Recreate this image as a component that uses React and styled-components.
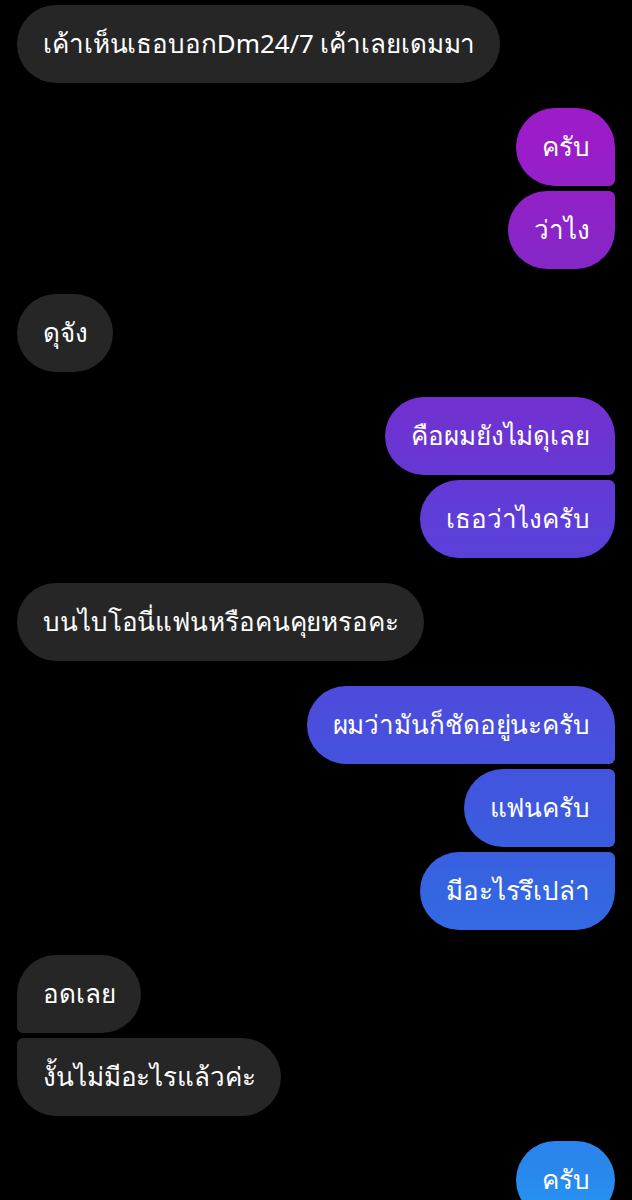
import React from 'react';
import styled, { createGlobalStyle, css } from 'styled-components';

const GlobalStyle = createGlobalStyle`
  html, body {
    margin: 0;
    padding: 0;
    background: #000;
  }
  body {
    font-family: "Noto Sans", "DejaVu Sans", sans-serif;
  }
`;

const messages = [
  { from: 'them', group: ['เค้าเห็นเธอบอกDm24/7 เค้าเลยเดมมา'] },
  { from: 'me', group: ['ครับ', 'ว่าไง'] },
  { from: 'them', group: ['ดุจัง'] },
  { from: 'me', group: ['คือผมยังไม่ดุเลย', 'เธอว่าไงครับ'] },
  { from: 'them', group: ['บนไบโอนี่แฟนหรือคนคุยหรอคะ'] },
  { from: 'me', group: ['ผมว่ามันก็ชัดอยู่นะครับ', 'แฟนครับ', 'มีอะไรรึเปล่า'] },
  { from: 'them', group: ['อดเลย', 'งั้นไม่มีอะไรแล้วค่ะ'] },
  { from: 'me', group: ['ครับ'] },
];

export default function App() {
  return (
    <>
      <GlobalStyle />
      <Thread>
        {messages.map((m, i) => (
          <Group key={i} $mine={m.from === 'me'}>
            {m.group.map((text, j) => (
              <Bubble
                key={j}
                $mine={m.from === 'me'}
                $first={j === 0}
                $last={j === m.group.length - 1}
              >
                {text}
              </Bubble>
            ))}
          </Group>
        ))}
      </Thread>
    </>
  );
}

const Thread = styled.div`
  display: flex;
  flex-direction: column;
  gap: 25px;
  padding: 5px 17px 0;
  height: 1200px;
  box-sizing: border-box;
  overflow: hidden;
`;

const Group = styled.div`
  display: flex;
  flex-direction: column;
  gap: 5px;
  align-items: ${(p) => (p.$mine ? 'flex-end' : 'flex-start')};
`;

const Bubble = styled.div`
  display: flex;
  align-items: center;
  height: 78px;
  flex-shrink: 0;
  box-sizing: border-box;
  padding: 0 25px 2px 26px;
  border-radius: 39px;
  color: #fff;
  font-size: 26px;
  letter-spacing: -0.1px;
  white-space: nowrap;
  background: #262626;

  ${(p) =>
    p.$mine &&
    css`
      background-image: linear-gradient(
        180deg,
        #a915c9 0px,
        #9a1dc9 145px,
        #8b24c6 230px,
        #6c34d2 437px,
        #5e3dd8 518px,
        #4a4edd 725px,
        #3e58de 808px,
        #3565e1 890px,
        #2a87ec 1170px,
        #2690f0 1200px
      );
      background-attachment: fixed;
    `}

  ${(p) =>
    !p.$first &&
    (p.$mine
      ? css`border-top-right-radius: 6px;`
      : css`border-top-left-radius: 6px;`)}

  ${(p) =>
    !p.$last &&
    (p.$mine
      ? css`border-bottom-right-radius: 6px;`
      : css`border-bottom-left-radius: 6px;`)}
`;
